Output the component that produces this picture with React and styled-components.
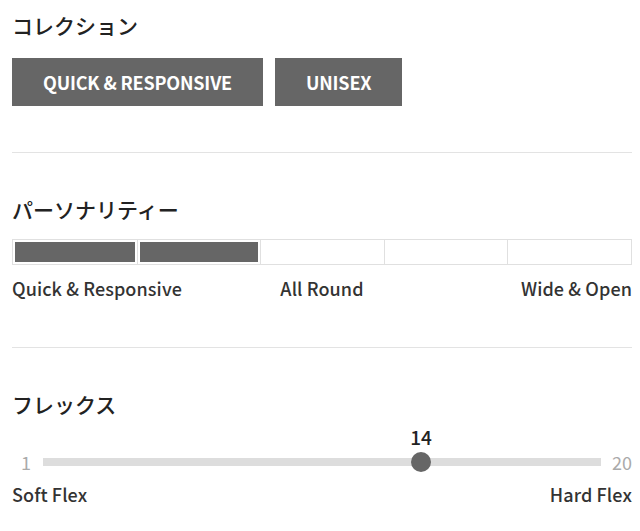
import React from "react";
import styled, { createGlobalStyle } from "styled-components";

const GlobalStyle = createGlobalStyle`
  body {
    margin: 0;
    background: #fff;
    font-family: "Noto Sans CJK JP", "Noto Sans", sans-serif;
    color: #222;
  }
`;

const Page = styled.div`
  padding: 10px 8px 0 12px;
`;

const Heading = styled.h2`
  margin: ${(p) => p.$top || 0}px 0 0;
  font-size: 21px;
  line-height: 30px;
  font-weight: 500;
  color: #222;
`;

const Divider = styled.hr`
  margin: ${(p) => p.$top}px 0 0;
  border: none;
  border-top: 1px solid #e3e3e3;
`;

const ButtonRow = styled.div`
  display: flex;
  gap: 12px;
  margin-top: 18px;
`;

const Tag = styled.button`
  height: 48px;
  padding: 0 31px;
  border: none;
  background: #666;
  color: #fff;
  font-family: inherit;
  font-size: 18px;
  font-weight: 700;
  letter-spacing: -0.18px;
`;

const Meter = styled.div`
  display: grid;
  grid-template-columns: repeat(5, 1fr);
  height: 26px;
  margin-top: 15px;
  border: 1px solid #e0e0e0;
  box-sizing: border-box;
`;

const Cell = styled.div`
  padding: 2px;
  & + & {
    border-left: 1px solid #e0e0e0;
  }
  &::after {
    content: "";
    display: block;
    height: 100%;
    background: ${(p) => (p.$on ? "#666" : "transparent")};
  }
`;

const Labels = styled.div`
  display: grid;
  grid-template-columns: ${(p) => p.$cols || "1fr 1fr"};
  margin-top: ${(p) => p.$top}px;
  font-size: 18px;
  line-height: 24px;
  font-weight: 500;
  letter-spacing: 0.1px;
  color: #333;
`;

const Label = styled.span`
  text-align: ${(p) => p.$align || "left"};
`;

const SliderBlock = styled.div`
  margin-top: 6px;
`;

const SliderRow = styled.div`
  display: flex;
  align-items: center;
  height: 20px;
  margin-top: 33px;
`;

const End = styled.span`
  width: 31px;
  font-size: 18px;
  color: #aaa;
  text-align: ${(p) => p.$align};
  padding-left: ${(p) => (p.$align === "left" ? 9 : 0)}px;
  box-sizing: border-box;
`;

const Track = styled.div`
  position: relative;
  flex: 1;
  height: 8px;
  background: #ddd;
`;

const Thumb = styled.div`
  position: absolute;
  top: 50%;
  width: 20px;
  height: 20px;
  margin-top: -10px;
  margin-left: -10px;
  border-radius: 50%;
  background: #666;
`;

const Value = styled.span`
  position: absolute;
  bottom: 22px;
  left: 50%;
  transform: translateX(-50%);
  font-size: 19px;
  font-weight: 500;
  color: #222;
`;

const personality = 2;
const flex = { min: 1, max: 20, value: 14 };

export default function App() {
  const pct = (flex.value - flex.min) / (flex.max - flex.min);
  return (
    <Page>
      <GlobalStyle />
      <Heading>コレクション</Heading>
      <ButtonRow>
        <Tag>QUICK &amp; RESPONSIVE</Tag>
        <Tag>UNISEX</Tag>
      </ButtonRow>
      <Divider $top={46} />

      <Heading $top={41}>パーソナリティー</Heading>
      <Meter>
        {[0, 1, 2, 3, 4].map((i) => (
          <Cell key={i} $on={i < personality} />
        ))}
      </Meter>
      <Labels $top={11} $cols="1fr 1fr 1fr">
        <Label>Quick &amp; Responsive</Label>
        <Label $align="center">All Round</Label>
        <Label $align="right">Wide &amp; Open</Label>
      </Labels>
      <Divider $top={47} />

      <Heading $top={41}>フレックス</Heading>
      <SliderBlock>
        <SliderRow>
          <End $align="left">{flex.min}</End>
          <Track>
            <Thumb style={{ left: `calc(10px + ${pct} * (100% - 20px))` }}>
              <Value>{flex.value}</Value>
            </Thumb>
          </Track>
          <End $align="right">{flex.max}</End>
        </SliderRow>
        <Labels $top={10}>
          <Label>Soft Flex</Label>
          <Label $align="right">Hard Flex</Label>
        </Labels>
      </SliderBlock>
    </Page>
  );
}
